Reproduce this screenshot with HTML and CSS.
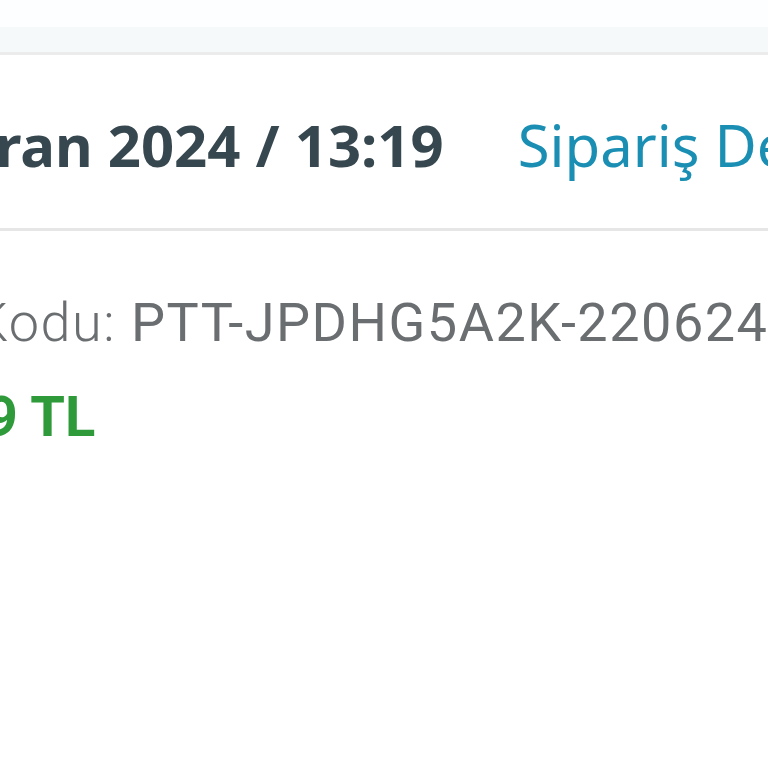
FILE: index.html
```html
<!DOCTYPE html>
<html lang="tr">

<head>
    <meta charset="UTF-8">
    <meta name="viewport" content="width=device-width, initial-scale=1.0">
    <title>Siparişlerim</title>
    <link rel="stylesheet" href="styles.css">
</head>

<body>
    <div class="page-top">
        <div class="tab-strip"></div>
    </div>

    <div class="order-card">
        <div class="order-head">
            <div class="order-date">22 Haziran 2024 / 13:19</div>
            <a class="order-link" href="#">Sipariş Detayı</a>
        </div>

        <div class="order-body">
            <div class="order-code">
                <span class="code-label">Sipariş Kodu:</span>
                <span class="code-value">PTT-JPDHG5A2K-22062413</span>
            </div>
            <div class="order-price">1.299 TL</div>
        </div>
    </div>
</body>

</html>
```

FILE: styles.css
```css
body {
    margin: 0;
    background: #ffffff;
    overflow: hidden;
}

.page-top {
    padding-top: 27px;
    background: #fdfeff;
}

.tab-strip {
    height: 25px;
    background: #f5f9fa;
    border-bottom: 3px solid #ececec;
}

.order-card {
    white-space: nowrap;
}

.order-head {
    display: flex;
    align-items: baseline;
    gap: 74px;
    padding: 55px 0 48px;
    margin-left: -211px;
    border-bottom: 3px solid #e6e6e6;
    font-family: "Noto Sans", sans-serif;
    font-size: 58px;
    line-height: 70px;
}

.order-date {
    font-weight: 700;
    color: #37474f;
}

.order-link {
    color: #1a8fb3;
    text-decoration: none;
}

.order-body {
    padding-top: 60px;
    font-family: Roboto, sans-serif;
}

.order-code {
    margin-left: -212px;
    font-size: 54px;
    line-height: 64px;
    letter-spacing: 1.5px;
    color: #6b6e70;
}

.code-label {
    font-weight: 300;
}

.order-price {
    margin-top: 30px;
    margin-left: -127px;
    font-size: 56px;
    line-height: 64px;
    font-weight: 700;
    color: #2e9a3a;
}
```
